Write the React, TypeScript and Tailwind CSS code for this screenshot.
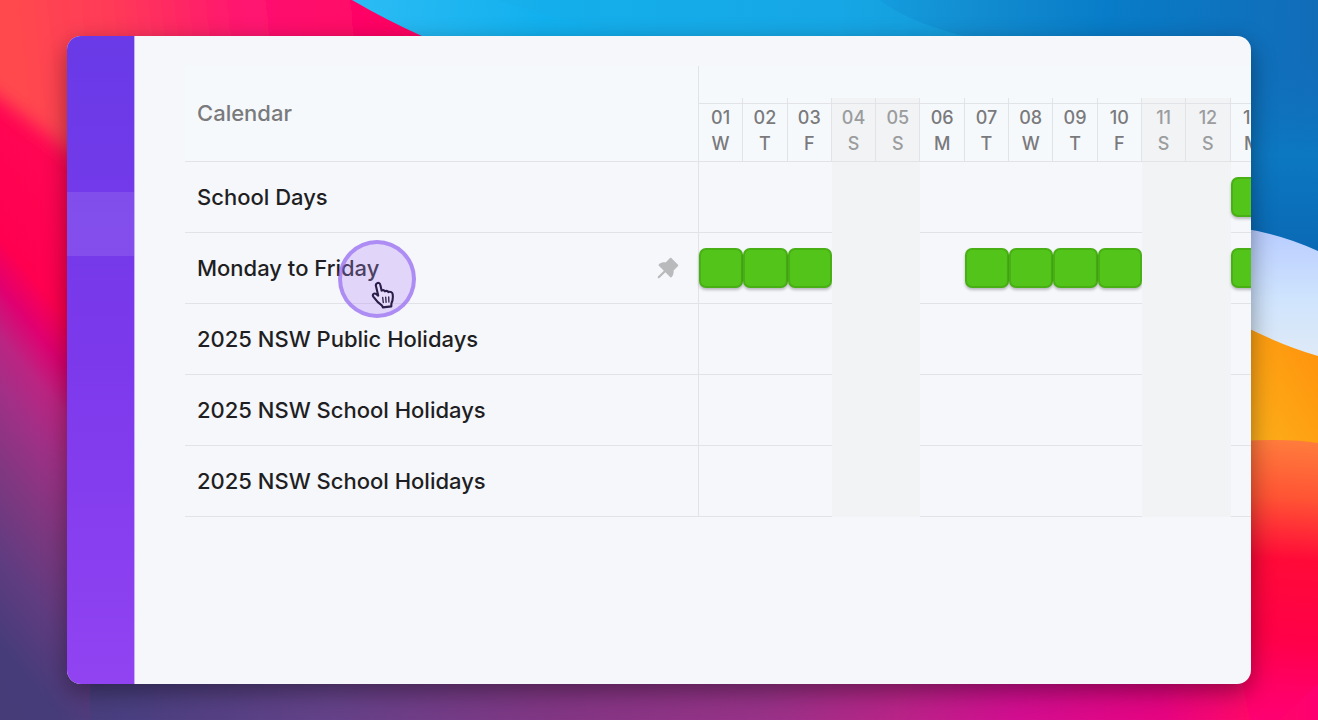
import { AiFillPushpin } from 'react-icons/ai';
import clsx from 'clsx';

interface Day {
  date: string;
  label: string;
  weekend?: boolean;
}

interface CalendarRow {
  name: string;
  active: string[];
  pinned?: boolean;
}

const days: Day[] = [
  { date: '01', label: 'W' },
  { date: '02', label: 'T' },
  { date: '03', label: 'F' },
  { date: '04', label: 'S', weekend: true },
  { date: '05', label: 'S', weekend: true },
  { date: '06', label: 'M' },
  { date: '07', label: 'T' },
  { date: '08', label: 'W' },
  { date: '09', label: 'T' },
  { date: '10', label: 'F' },
  { date: '11', label: 'S', weekend: true },
  { date: '12', label: 'S', weekend: true },
  { date: '13', label: 'M' },
];

const rows: CalendarRow[] = [
  { name: 'School Days', active: ['13'] },
  { name: 'Monday to Friday', active: ['01', '02', '03', '07', '08', '09', '10', '13'], pinned: true },
  { name: '2025 NSW Public Holidays', active: [] },
  { name: '2025 NSW School Holidays', active: [] },
  { name: '2025 NSW School Holidays', active: [] },
];

function Wallpaper() {
  return (
    <svg
      className="absolute inset-0 h-full w-full"
      viewBox="0 0 1318 720"
      preserveAspectRatio="none"
      aria-hidden="true"
    >
      <defs>
        <linearGradient id="base" gradientUnits="userSpaceOnUse" x1="0" y1="0" x2="1318" y2="0">
          <stop offset="0" stopColor="#453c78" />
          <stop offset="0.1" stopColor="#4a3f80" />
          <stop offset="0.25" stopColor="#644289" />
          <stop offset="0.42" stopColor="#823684" />
          <stop offset="0.58" stopColor="#983288" />
          <stop offset="0.68" stopColor="#b82488" />
          <stop offset="0.77" stopColor="#d20e90" />
          <stop offset="0.88" stopColor="#e60482" />
          <stop offset="0.95" stopColor="#ff0868" />
          <stop offset="1" stopColor="#ff0070" />
        </linearGradient>
        <linearGradient id="left" gradientUnits="userSpaceOnUse" x1="0" y1="0" x2="-344" y2="287">
          <stop offset="0" stopColor="#ff0a55" />
          <stop offset="0.34" stopColor="#ff0050" />
          <stop offset="0.41" stopColor="#e00070" />
          <stop offset="0.48" stopColor="#bc2482" />
          <stop offset="0.56" stopColor="#a03086" />
          <stop offset="0.68" stopColor="#7d3880" />
          <stop offset="0.8" stopColor="#5f3c80" />
          <stop offset="0.92" stopColor="#473c7a" />
          <stop offset="1" stopColor="#453c78" />
        </linearGradient>
        <linearGradient id="top" gradientUnits="userSpaceOnUse" x1="20" y1="40" x2="400" y2="0">
          <stop offset="0" stopColor="#ff484e" />
          <stop offset="0.25" stopColor="#ff3a58" />
          <stop offset="0.6" stopColor="#ff1470" />
          <stop offset="1" stopColor="#ff0062" />
        </linearGradient>
        <linearGradient id="blue" gradientUnits="userSpaceOnUse" x1="350" y1="0" x2="1318" y2="60">
          <stop offset="0" stopColor="#2cbcf4" />
          <stop offset="0.2" stopColor="#12b0ee" />
          <stop offset="0.5" stopColor="#14a4e4" />
          <stop offset="0.65" stopColor="#128cd0" />
          <stop offset="0.78" stopColor="#087cc8" />
          <stop offset="1" stopColor="#126cb8" />
        </linearGradient>
        <linearGradient id="deep" x1="0" y1="0" x2="0" y2="1">
          <stop offset="0" stopColor="#126cb8" stopOpacity="0" />
          <stop offset="0.5" stopColor="#0c78c2" />
          <stop offset="1" stopColor="#0a66b2" />
        </linearGradient>
        <linearGradient id="ice" x1="0" y1="0" x2="0" y2="1">
          <stop offset="0" stopColor="#b8ccff" />
          <stop offset="0.5" stopColor="#cfe4fd" />
          <stop offset="1" stopColor="#e2ebf5" />
        </linearGradient>
        <linearGradient id="orange" x1="1" y1="0" x2="0" y2="1">
          <stop offset="0" stopColor="#ff900a" />
          <stop offset="1" stopColor="#fdb31c" />
        </linearGradient>
        <linearGradient id="red" gradientUnits="userSpaceOnUse" x1="1270" y1="440" x2="1250" y2="720">
          <stop offset="0" stopColor="#ff7b3c" />
          <stop offset="0.2" stopColor="#ff5434" />
          <stop offset="0.42" stopColor="#ff0a38" />
          <stop offset="0.7" stopColor="#ff0048" />
          <stop offset="0.9" stopColor="#ff0068" />
          <stop offset="1" stopColor="#ff0072" />
        </linearGradient>
        <filter id="soft" x="-20%" y="-20%" width="140%" height="140%">
          <feGaussianBlur stdDeviation="9" />
        </filter>
      </defs>
      <rect width="1318" height="720" fill="url(#base)" />
      <rect width="90" height="720" fill="url(#left)" />
      <path d="M-30 -30H460V40L120 190L67 150L-30 76Z" fill="url(#top)" filter="url(#soft)" />
      <path d="M352 0H1318V260H1240V60H460L424 37Q386 20 352 0Z" fill="url(#blue)" />
      <path d="M500 0Q580 30 700 40H980Q910 24 880 0Z" fill="#18ace8" opacity="0.4" />
      <rect x="1240" y="40" width="78" height="230" fill="url(#deep)" />
      <path d="M1240 228Q1282 234 1318 251V370H1240Z" fill="url(#ice)" />
      <path d="M1240 324Q1280 345 1318 356V450H1240Z" fill="url(#orange)" />
      <path d="M1240 441Q1290 438 1318 443V684L1280 720H1250L1240 670Z" fill="url(#red)" />
    </svg>
  );
}

function Sidebar() {
  return (
    <nav
      aria-label="Main"
      className="w-[68px] shrink-0 border-r border-[#c8b0f8] bg-linear-to-b from-[#693ae7] via-[#7c39ec] to-[#9143f1]"
    >
      <a href="#calendars" aria-label="Calendars" className="mt-[156px] block h-16 bg-white/10" />
    </nav>
  );
}

function ClickPointer() {
  return (
    <span className="pointer-events-none absolute -top-3 left-[141px] flex size-[78px] items-center justify-center rounded-full border-4 border-[#8a5cf0]/60 bg-[#b48cf5]/30">
      <svg viewBox="0 0 24 28" className="mt-8 ml-3 h-7 w-6" aria-hidden="true">
        <path
          d="M6.2 2.2C7.6 1.4 9 2.2 9.3 3.8L10.6 9.6C12 8.9 13.2 9.2 13.9 10.3C15.4 9.5 16.8 9.9 17.5 11.1C19.4 10.2 21.5 11.2 21.7 13.4C22.1 17 22 19.6 20.4 22.5L20.3 25.4L12 26.4L10.8 24.4C8 22.5 5 19.4 2.3 15.6C1 13.6 3 11.8 5 12.9L7.2 14.6L4.9 4.8C4.6 3.6 5.1 2.7 6.2 2.2Z"
          fill="#e6dcfa"
          stroke="#2b1d4a"
          strokeWidth="2.1"
          strokeLinejoin="round"
        />
        <path
          d="M11.7 16.4L12.3 21.6M14.7 16.2L15.1 21.4M17.7 15.9L17.9 21"
          stroke="#2b1d4a"
          strokeWidth="1.3"
          strokeLinecap="round"
        />
      </svg>
    </span>
  );
}

function Timeline() {
  return (
    <table className="w-[1090px] table-fixed border-separate border-spacing-0 text-left">
      <colgroup>
        <col className="w-[514px]" />
        {days.map((day) => (
          <col key={day.date} />
        ))}
      </colgroup>
      <thead className="bg-[#f6f9fc] text-[#7a7a7c]">
        <tr className="h-8">
          <th
            rowSpan={2}
            scope="col"
            className="border-r border-b border-[#e1e3e6] px-3 text-[22px] font-medium"
          >
            Calendar
          </th>
          <td colSpan={13} />
        </tr>
        <tr>
          {days.map((day) => (
            <th
              key={day.date}
              scope="col"
              className={clsx(
                'h-16 border-r border-b border-[#e1e3e6] p-0 pt-[5px] text-center align-top text-lg leading-[26px] font-medium',
                day.weekend && 'bg-[#f1f3f5] text-[#9b9c9e]'
              )}
            >
              <div className="border-t border-[#e1e3e6] pt-px">{day.date}</div>
              <div>{day.label}</div>
            </th>
          ))}
        </tr>
      </thead>
      <tbody>
        {rows.map((row, index) => (
          <tr key={index} className="h-[71px]">
            <th scope="row" className="border-r border-b border-[#e1e3e6] px-3 text-[22px] font-medium text-[#1f1f23]">
              <div className="relative flex items-center justify-between">
                {row.name}
                {row.pinned && (
                  <button type="button" aria-label="Unpin calendar" className="mr-1 text-[#b9babc]">
                    <AiFillPushpin className="size-7" />
                  </button>
                )}
                {row.pinned && <ClickPointer />}
              </div>
            </th>
            {days.map((day) => (
              <td
                key={day.date}
                className={clsx('p-0', day.weekend ? 'bg-[#f2f3f4]' : 'border-b border-[#e1e3e6]')}
              >
                {row.active.includes(day.date) && (
                  <div className="h-10 rounded-[7px] border-2 border-[#48b015] bg-[#52c41a] shadow-[0_2px_3px_rgba(0,0,0,0.25)]" />
                )}
              </td>
            ))}
          </tr>
        ))}
      </tbody>
    </table>
  );
}

export default function App() {
  return (
    <div className="relative flex min-h-screen overflow-hidden px-[67px] py-9 font-['Inter',sans-serif]">
      <Wallpaper />
      <div className="relative flex min-w-0 flex-1 overflow-hidden rounded-[14px] bg-[#f5f7fb] shadow-[0_8px_24px_rgba(0,0,0,0.4)]">
        <Sidebar />
        <main className="min-w-0 flex-1 overflow-hidden pt-[30px] pl-[50px]">
          <Timeline />
        </main>
      </div>
    </div>
  );
}
